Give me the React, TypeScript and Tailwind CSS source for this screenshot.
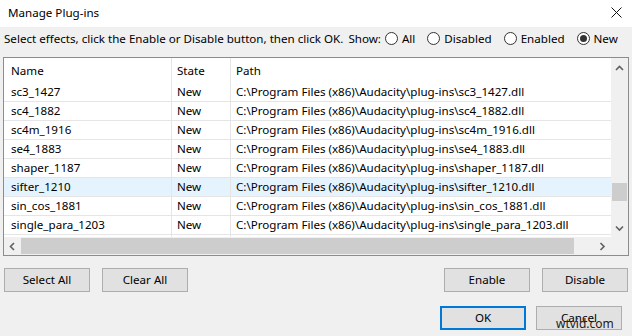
import React from 'react';

type Plugin = { name: string; state: string };

const plugins: Plugin[] = [
  { name: 'sc3_1427', state: 'New' },
  { name: 'sc4_1882', state: 'New' },
  { name: 'sc4m_1916', state: 'New' },
  { name: 'se4_1883', state: 'New' },
  { name: 'shaper_1187', state: 'New' },
  { name: 'sifter_1210', state: 'New' },
  { name: 'sin_cos_1881', state: 'New' },
  { name: 'single_para_1203', state: 'New' },
];

const Radio = ({ label, checked }: { label: string; checked?: boolean }) => (
  <label className="flex items-center gap-[4px]">
    <span className="w-[13px] h-[13px] rounded-full border border-[#333] bg-white flex items-center justify-center">
      {checked && <span className="w-[7px] h-[7px] rounded-full bg-[#333]"></span>}
    </span>
    <span>{label}</span>
  </label>
);

const Chevron = ({ dir }: { dir: 'up' | 'down' | 'left' | 'right' }) => {
  const d = {
    up: 'M1 5 L4.5 1.5 L8 5',
    down: 'M1 1.5 L4.5 5 L8 1.5',
    left: 'M5 1 L1.5 4.5 L5 8',
    right: 'M1.5 1 L5 4.5 L1.5 8',
  }[dir];
  const vertical = dir === 'up' || dir === 'down';
  return (
    <svg width={vertical ? 9 : 7} height={vertical ? 7 : 9} viewBox={vertical ? '0 0 9 7' : '0 0 7 9'}>
      <path d={d} fill="none" stroke="#606060" strokeWidth="1.6" />
    </svg>
  );
};

const Button = ({ children, primary }: { children: React.ReactNode; primary?: boolean }) => (
  <button
    className={
      primary
        ? 'w-[86px] h-[24px] bg-[#e1e1e1] border-2 border-[#0078d7] text-black'
        : 'w-[86px] h-[24px] bg-[#e1e1e1] border border-[#adadad] text-black'
    }
  >
    {children}
  </button>
);

const rowCols = 'grid grid-cols-[168px_59px_1fr] items-center';

const App: React.FC = () => {
  return (
    <div className="w-[632px] h-[336px] bg-[#f0f0f0] flex flex-col text-[11.6px] text-black relative overflow-hidden whitespace-nowrap font-['Noto_Sans',sans-serif]">
      {/* title bar */}
      <div className="h-[27px] bg-white flex items-center justify-between pl-[8px] pr-[10px] pb-[2px] shrink-0">
        <span>Manage Plug-ins</span>
        <svg width="11" height="11" viewBox="0 0 11 11">
          <path d="M0.5 0.5 L10.5 10.5 M10.5 0.5 L0.5 10.5" stroke="#111" strokeWidth="1" />
        </svg>
      </div>

      {/* instructions + filter */}
      <div className="h-[24px] flex items-center pl-[4px] mb-[6px]">
        <span>Select effects, click the Enable or Disable button, then click OK.</span>
        <span className="ml-[5px]">Show:</span>
        <div className="flex items-center gap-[12px] ml-[4px]">
          <Radio label="All" />
          <Radio label="Disabled" />
          <Radio label="Enabled" />
          <Radio label="New" checked />
        </div>
      </div>

      {/* list */}
      <div className="mx-[3px] w-[626px] h-[199px] border border-[#8c8c8c] bg-white grid grid-cols-[1fr_17px] grid-rows-[1fr_18px]">
        <div className="overflow-hidden flex flex-col">
          <div className={rowCols + ' h-[25px] shrink-0'}>
            <div className="pl-[7px] h-full flex items-center border-r border-[#e5e5e5]">Name</div>
            <div className="pl-[5px] h-full flex items-center border-r border-[#e5e5e5]">State</div>
            <div className="pl-[5px]">Path</div>
          </div>
          {plugins.map((p) => (
            <div
              key={p.name}
              className={
                p.name === 'sifter_1210'
                  ? rowCols + ' h-[19px] shrink-0 bg-[#e5f3ff] border-b border-[#e5e5e5]'
                  : rowCols + ' h-[19px] shrink-0 border-b border-[#e5e5e5]'
              }
            >
              <div className="pl-[7px] h-full flex items-center border-r border-[#e5e5e5]">{p.name}</div>
              <div className="pl-[5px] h-full flex items-center border-r border-[#e5e5e5]">{p.state}</div>
              <div className="pl-[5px]">{'C:\\Program Files (x86)\\Audacity\\plug-ins\\' + p.name + '.dll'}</div>
            </div>
          ))}
          {/* partially visible next row */}
          <div className={rowCols + ' flex-1'}>
            <div className="h-full border-r border-[#e5e5e5]"></div>
            <div className="h-full border-r border-[#e5e5e5]"></div>
            <div></div>
          </div>
        </div>

        {/* vertical scrollbar */}
        <div className="bg-[#f0f0f0] flex flex-col items-center">
          <div className="h-[17px] flex items-center justify-center mt-[2px]">
            <Chevron dir="up" />
          </div>
          <div className="flex-1 w-full flex flex-col px-[1px]">
            <div className="h-[106px]"></div>
            <div className="h-[18px] bg-[#cdcdcd]"></div>
          </div>
          <div className="h-[17px] flex items-center justify-center">
            <Chevron dir="down" />
          </div>
        </div>

        {/* horizontal scrollbar */}
        <div className="bg-[#f0f0f0] flex items-center">
          <div className="w-[17px] flex items-center justify-center">
            <Chevron dir="left" />
          </div>
          <div className="flex-1 h-full py-[1px]">
            <div className="w-[553px] h-full bg-[#cdcdcd]"></div>
          </div>
          <div className="w-[17px] flex items-center justify-center">
            <Chevron dir="right" />
          </div>
        </div>
        <div className="bg-[#f0f0f0]"></div>
      </div>

      {/* buttons */}
      <div className="flex justify-between px-[4px] mt-[12px]">
        <div className="flex gap-[12px]">
          <Button>Select All</Button>
          <Button>Clear All</Button>
        </div>
        <div className="flex gap-[12px]">
          <Button>Enable</Button>
          <Button>Disable</Button>
        </div>
      </div>
      <div className="flex justify-end gap-[10px] pr-[10px] mt-[14px]">
        <Button primary>OK</Button>
        <Button>Cancel</Button>
      </div>

      <span className="absolute left-[556px] top-[318px] text-[12px] text-[#222] leading-none">wtvid.com</span>
    </div>
  );
};

export default App;
